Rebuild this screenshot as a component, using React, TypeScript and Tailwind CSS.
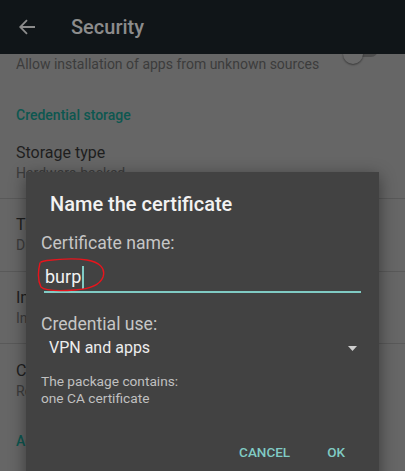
import React from "react";

const font = { fontFamily: "Roboto, 'Noto Sans', sans-serif" };

function Row({ title, summary }: { title: string; summary: string }) {
  return (
    <div className="px-4 pt-[16px] pb-[16px]">
      <div className="text-[16px] leading-[20px] text-[#1e1e1e]">{title}</div>
      <div className="text-[14px] leading-[20px] text-[#3c3c3c]">{summary}</div>
    </div>
  );
}

export default function App() {
  return (
    <div
      className="relative w-[405px] h-[471px] overflow-hidden bg-[#666666]"
      style={font}
    >
      {/* Toolbar */}
      <div className="relative z-10 flex h-[54px] items-center bg-[#101518]">
        <svg
          className="ml-[19px]"
          width="16"
          height="16"
          viewBox="0 0 16 16"
          fill="none"
          stroke="#8c8c8c"
          strokeWidth="1.8"
        >
          <path d="M16 8H1.5M8 1.2L1.2 8L8 14.8" />
        </svg>
        <div className="ml-[36px] text-[20px] font-medium text-[#8c8c8c]">
          Security
        </div>
      </div>

      {/* Settings list */}
      <div className="flex flex-col">
        <div className="-mt-[36px] flex items-center pl-4 pr-[27px]">
          <div className="flex-1 pt-[16px] pb-[16px]">
            <div className="text-[16px] leading-[20px] text-[#1e1e1e]">
              Unknown sources
            </div>
            <div className="text-[14px] leading-[20px] text-[#3c3c3c]">
              Allow installation of apps from unknown sources
            </div>
          </div>
          <div className="relative h-[20px] w-[34px]">
            <div className="absolute left-0 right-0 top-[-1px] h-[14px] rounded-full bg-[#4e4e4e]" />
            <div className="absolute left-[-1px] top-[0px] h-[20px] w-[20px] rounded-full bg-[#6a6a6a] shadow-[0_1px_2px_rgba(0,0,0,0.45)]" />
          </div>
        </div>

        <div className="px-4 pt-[15px] pb-[2px] text-[14px] leading-[20px] font-medium text-[#0d5750]">
          Credential storage
        </div>

        <div className="px-4 pt-[16px] pb-[15px]">
          <div className="text-[16px] leading-[20px] text-[#1e1e1e]">Storage type</div>
          <div className="text-[14px] leading-[20px] text-[#3c3c3c]">Hardware-backed</div>
        </div>
        <div className="h-px bg-[#595959]" />
        <Row title="Trusted credentials" summary="Display trusted CA certificates" />
        <div className="h-px bg-[#595959]" />
        <div className="px-4 pt-[16px] pb-[15px]">
          <div className="text-[16px] leading-[20px] text-[#1e1e1e]">Install from SD card</div>
          <div className="text-[14px] leading-[20px] text-[#3c3c3c]">
            Install certificates from SD card
          </div>
        </div>
        <div className="h-px bg-[#595959]" />
        <div className="px-4 pt-[17px] pb-[16px]">
          <div className="text-[16px] leading-[20px] text-[#1e1e1e]">Clear credentials</div>
          <div className="text-[14px] leading-[20px] text-[#3c3c3c]">Remove all certificates</div>
        </div>
        <div className="px-4 pt-[14px] text-[14px] leading-[20px] font-medium text-[#0d5750]">
          Advanced
        </div>
      </div>

      {/* Dialog */}
      <div className="absolute left-[26px] top-[172px] h-[320px] w-[353px] bg-[#424242] shadow-[0_4px_16px_rgba(0,0,0,0.45)]">
        <div className="pl-[24px] pt-[20px] text-[20px] leading-[24px] font-medium text-[#f2f2f2]">
          Name the certificate
        </div>
        <div className="pl-[15px] pr-[18px]">
          <div className="mt-[17px] text-[17.6px] leading-[20px] text-[#c6c6c6]">
            Certificate name:
          </div>
          <div className="relative ml-[3px] mt-[12px] border-b-2 border-[#80cbc4] pb-[2px]">
            <div className="flex items-center text-[18px] leading-[24px] text-[#f2f2f2]">
              <span className="ml-px">burp</span>
              <span className="ml-px inline-block h-[23px] w-[2px] bg-[#80cbc4]" />
            </div>
            <svg
              className="pointer-events-none absolute left-[-7px] top-[-8px]"
              width="72"
              height="36"
              viewBox="0 0 72 36"
              fill="none"
              stroke="#e8141c"
              strokeWidth="1.4"
              strokeLinecap="round"
            >
              <path d="M3 6 C 1 14, 1 24, 4 30 C 8 34, 24 34, 38 33 C 52 32, 63 28, 66 20 C 69 11, 62 5, 50 3 C 38 1, 22 2, 10 3.5 C 7 4, 5 4.5, 4 5" />
            </svg>
          </div>
          <div className="mt-[21px] text-[17.6px] leading-[20px] text-[#c6c6c6]">
            Credential use:
          </div>
          <div className="mt-[4px] flex items-center justify-between pl-[8px] pr-[4px]">
            <span className="text-[16px] leading-[20px] text-[#ededed]">VPN and apps</span>
            <svg width="9" height="5" viewBox="0 0 9 5">
              <path d="M0 0H9L4.5 5Z" fill="#cfcfcf" />
            </svg>
          </div>
          <div className="mt-[15px] text-[13.7px] leading-[17px] text-[#c0c0c0]">
            <div>The package contains:</div>
            <div>one CA certificate</div>
          </div>
        </div>
        <div className="mt-[35px] flex justify-end gap-[37px] pr-[34px] text-[13.5px] leading-[20px] font-medium text-[#80cbc4]">
          <span>CANCEL</span>
          <span>OK</span>
        </div>
      </div>
    </div>
  );
}
